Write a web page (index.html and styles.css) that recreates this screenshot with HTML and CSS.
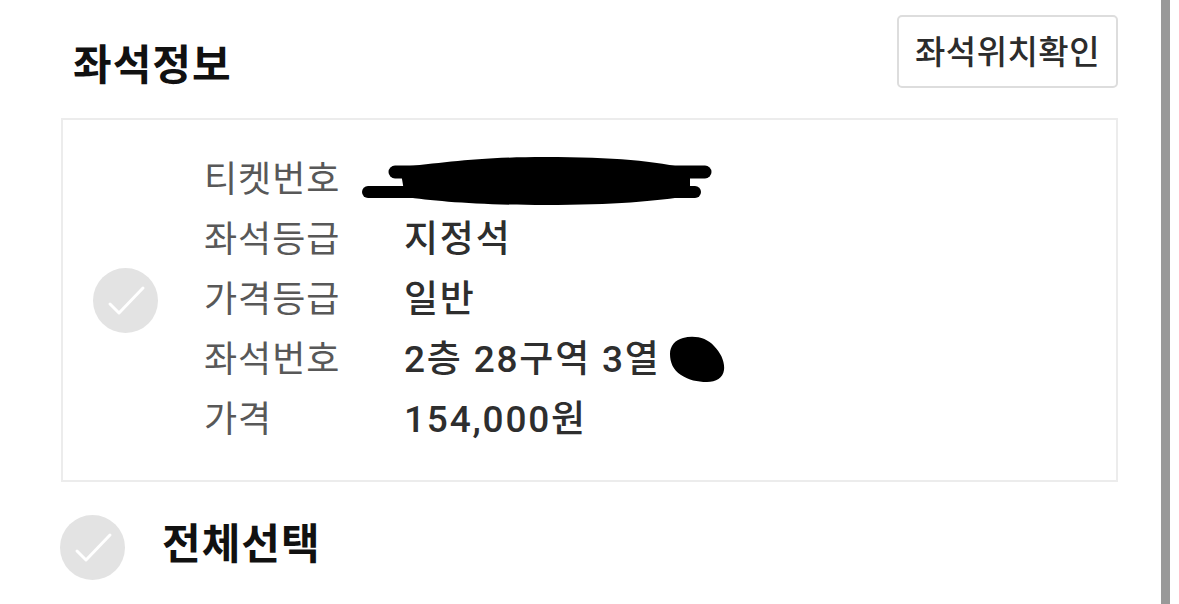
FILE: index.html
```html
<!DOCTYPE html>
<html lang="ko">
<head>
<meta charset="utf-8">
<title>좌석정보</title>
<link rel="stylesheet" href="styles.css">
</head>
<body>
<div class="screen">
  <main class="content">
    <header class="header">
      <h1 class="title">좌석정보</h1>
      <button class="locate-btn" type="button">좌석위치확인</button>
    </header>

    <section class="seat-card">
      <span class="check">
        <svg viewBox="0 0 65 65" width="65" height="65"><circle cx="32.5" cy="32.5" r="32.5" fill="#e3e3e3"/><path d="M17 36 L26 45 L50 20" fill="none" stroke="#fff" stroke-width="3" stroke-linecap="round" stroke-linejoin="round"/></svg>
      </span>
      <dl class="info">
        <div class="row">
          <dt>티켓번호</dt>
          <dd>
            <svg class="scribble" viewBox="0 0 370 55" width="370" height="55">
              <path d="M40 21 L350 21" stroke="#000" stroke-width="13" stroke-linecap="round"/>
              <path d="M13 41 L340 41" stroke="#000" stroke-width="12" stroke-linecap="round"/>
              <path d="M45 16 C90 12 120 6 190 6 C260 6 300 10 335 18 L335 45 C300 50 260 54 190 54 C120 54 80 50 50 46 Z" fill="#000"/>
            </svg>
          </dd>
        </div>
        <div class="row">
          <dt>좌석등급</dt>
          <dd>지정석</dd>
        </div>
        <div class="row">
          <dt>가격등급</dt>
          <dd>일반</dd>
        </div>
        <div class="row">
          <dt>좌석번호</dt>
          <dd>2층 28구역 3열<svg class="blot" viewBox="0 0 56 47" width="56" height="47"><path d="M14 2 C26 -1 38 2 45 10 C52 17 56 26 55 34 C54 42 47 46 38 46 C28 46 20 44 12 39 C4 34 1 26 1 18 C1 10 6 4 14 2 Z" fill="#000"/></svg></dd>
        </div>
        <div class="row">
          <dt>가격</dt>
          <dd>154,000원</dd>
        </div>
      </dl>
    </section>

    <label class="select-all">
      <span class="check">
        <svg viewBox="0 0 65 65" width="65" height="65"><circle cx="32.5" cy="32.5" r="32.5" fill="#e3e3e3"/><path d="M17 36 L26 45 L50 20" fill="none" stroke="#fff" stroke-width="3" stroke-linecap="round" stroke-linejoin="round"/></svg>
      </span>
      <span class="select-all-text">전체선택</span>
    </label>
  </main>
  <div class="scrollbar"></div>
</div>
</body>
</html>
```
FILE: styles.css
```css
* {
  box-sizing: border-box;
}

html, body {
  margin: 0;
  padding: 0;
  background: #fff;
}

body {
  font-family: "Noto Sans CJK KR", "Noto Sans", sans-serif;
  color: #333;
  width: 1179px;
  height: 604px;
  overflow: hidden;
}

.screen {
  display: flex;
  height: 604px;
}

.content {
  width: 1161px;
  padding-left: 61px;
  padding-right: 43px;
}

.scrollbar {
  width: 9px;
  height: 604px;
  background: #999;
}

/* header */
.header {
  height: 118px;
  padding-top: 15px;
  display: flex;
  justify-content: space-between;
  align-items: flex-start;
}

.title {
  margin: 22px 0 0 12px;
  font-size: 42px;
  line-height: 50px;
  font-weight: 700;
  color: #111;
  letter-spacing: 1px;
}

.locate-btn {
  height: 73px;
  width: 221px;
  padding: 0 0 3px;
  border: 2px solid #ddd;
  border-radius: 5px;
  background: #fff;
  font-family: inherit;
  font-size: 33px;
  font-weight: 500;
  color: #2c2c2c;
  line-height: 1;
  letter-spacing: 0.5px;
}

/* seat card */
.seat-card {
  height: 364px;
  border: 2px solid #ececec;
  display: flex;
  align-items: center;
  padding-left: 30px;
}

.check {
  display: flex;
  width: 65px;
  height: 65px;
  flex: none;
}

.info {
  margin: -8px 0 0 46px;
  padding: 0;
}

.row {
  display: flex;
  align-items: center;
  height: 60px;
}

.row dt {
  width: 200px;
  font-size: 36px;
  font-weight: 400;
  color: #585858;
  letter-spacing: 1px;
}

.row dd {
  margin: 0;
  display: flex;
  align-items: center;
  font-family: Roboto, "Noto Sans CJK KR", sans-serif;
  font-size: 37px;
  font-weight: 500;
  color: #2e2e2e;
  letter-spacing: 1.8px;
}

.scribble {
  display: block;
  margin-left: -49px;
  margin-top: 4px;
}

.blot {
  display: block;
  flex: none;
  margin-left: 8px;
  margin-top: 6px;
}

/* select all */
.select-all {
  display: flex;
  align-items: center;
  margin-top: 33px;
  margin-left: -1px;
}

.select-all-text {
  margin-left: 37px;
  font-size: 42px;
  font-weight: 700;
  color: #111;
  letter-spacing: 1px;
  margin-top: -14px;
}
```
